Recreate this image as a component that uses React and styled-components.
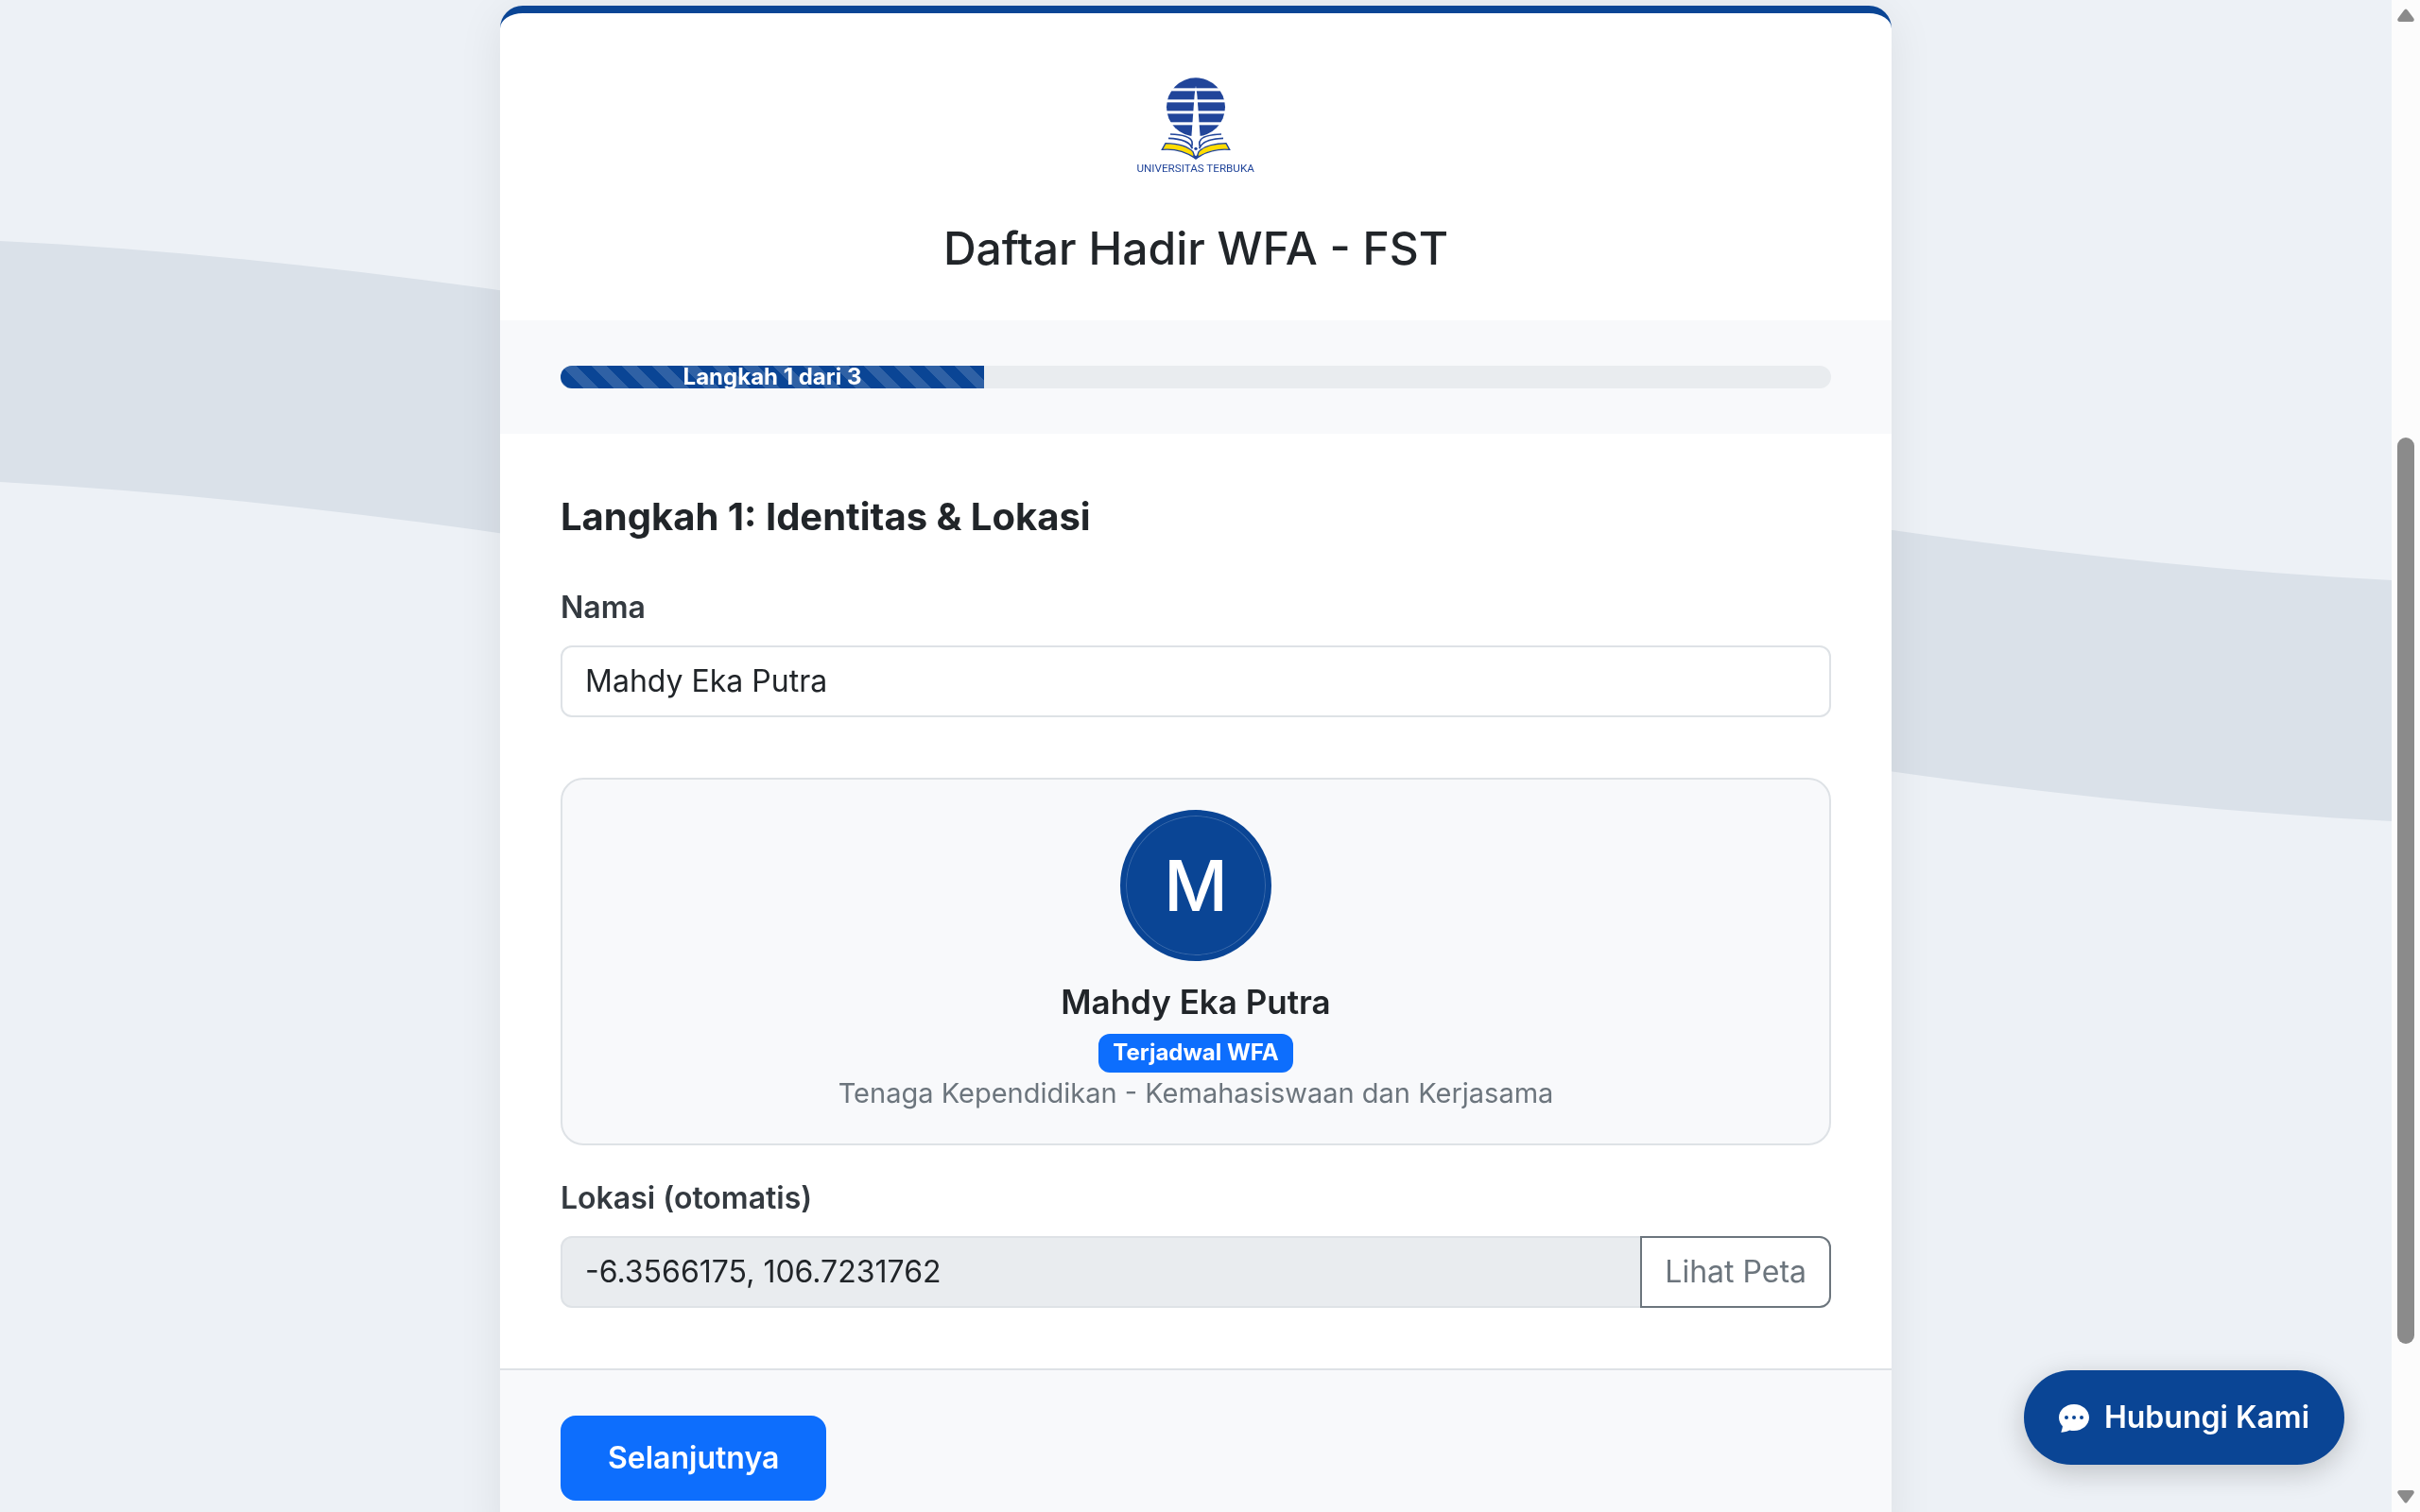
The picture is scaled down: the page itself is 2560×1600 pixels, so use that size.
import React, { useState } from "react";
import styled, { createGlobalStyle, css } from "styled-components";
import { BsChatDotsFill } from "react-icons/bs";

const navy = "#0a4595";
const blue = "#0d6efd";
const lightGrey = "#f8f9fb";
const borderGrey = "#dee2e6";
const scrollbarWidth = "30px";

const GlobalStyle = createGlobalStyle`
    *, *::before, *::after {
        box-sizing: border-box;
    }

    body {
        margin: 0;
        background: #edf1f6;
        color: #212529;
        font-family: Inter, "Liberation Sans", sans-serif;
        font-size: 32px;
        line-height: 48px;
    }

    button, input {
        font: inherit;
    }
`

const Page = styled.div`
    height: 100vh;
    overflow: hidden;
    padding: 6px ${scrollbarWidth} 0 0;
`

const Wave = styled.svg`
    position: fixed;
    top: 0;
    left: 0;
    z-index: -1;
    width: calc(100% - ${scrollbarWidth});
    height: 100%;
`

const Card = styled.main`
    max-width: 1472px;
    margin: 0 auto;
    overflow: hidden;
    background: #fff;
    border-top: 8px solid ${navy};
    border-radius: 24px;
    box-shadow: 0 8px 48px rgba(0, 0, 0, 0.08);
`

const Header = styled.header`
    display: flex;
    flex-direction: column;
    align-items: center;
    gap: 24px;
    padding: 48px 64px;
`

const Title = styled.h1`
    margin: 0;
    font-size: 48px;
    font-weight: 500;
    line-height: 57px;
`

const ProgressSection = styled.div`
    padding: 48px 64px;
    background: ${lightGrey};
`

const Progress = styled.div`
    display: flex;
    height: 24px;
    overflow: hidden;
    background: #e9ecef;
    border-radius: 12px;
`

const ProgressBar = styled.div`
    overflow: hidden;
    background-color: ${navy};
    background-image: linear-gradient(
        45deg,
        rgba(255, 255, 255, 0.15) 25%,
        transparent 25%,
        transparent 50%,
        rgba(255, 255, 255, 0.15) 50%,
        rgba(255, 255, 255, 0.15) 75%,
        transparent 75%,
        transparent
    );
    background-size: 32px 32px;
    color: #fff;
    font-size: 24px;
    font-weight: 700;
    line-height: 24px;
    text-align: center;
    white-space: nowrap;
`

const Body = styled.section`
    padding: 64px;
`

const StepTitle = styled.h2`
    margin: 0 0 48px;
    font-size: 40px;
    font-weight: 700;
    line-height: 48px;
`

const Label = styled.label`
    display: block;
    margin-bottom: 16px;
    color: #343a40;
    font-weight: 600;
`

const Input = styled.input`
    display: block;
    width: 100%;
    min-width: 0;
    height: 76px;
    padding: 11px 24px 13px;
    background: #fff;
    border: 2px solid ${borderGrey};
    border-radius: 12px;
    color: #212529;
    ${props => props.readOnly && css`
        flex: 1;
        background: #e9ecef;
        border-radius: 12px 0 0 12px;
    `}
`

const InputGroup = styled.div`
    display: flex;
`

const OutlineButton = styled.button`
    margin-left: -2px;
    padding: 12px 24px;
    background: transparent;
    border: 2px solid #6c757d;
    border-radius: 0 12px 12px 0;
    color: #6c757d;
`

const Profile = styled.div`
    display: flex;
    flex-direction: column;
    align-items: center;
    margin: 64px 0 32px;
    padding: 32px;
    background: ${lightGrey};
    border: 2px solid ${borderGrey};
    border-radius: 24px;
`

const Avatar = styled.div`
    display: flex;
    align-items: center;
    justify-content: center;
    width: 160px;
    height: 160px;
    margin-bottom: 16px;
    background: ${navy};
    border: 6px solid ${navy};
    border-radius: 50%;
    box-shadow: inset 0 0 0 1px rgba(255, 255, 255, 0.2);
    color: #fff;
    font-size: 74px;
    font-weight: 500;
`

const ProfileName = styled.div`
    font-size: 35px;
    font-weight: 600;
    line-height: 54px;
`

const Badge = styled.span`
    margin: 7px 0 1px;
    padding: 7px 15px 9px;
    background: ${blue};
    border-radius: 12px;
    color: #fff;
    font-size: 24px;
    font-weight: 700;
    line-height: 25px;
`

const ProfileRole = styled.div`
    color: #6c757d;
    font-size: 29px;
    line-height: 42px;
`

const Footer = styled.footer`
    padding: 48px 64px;
    background: ${lightGrey};
    border-top: 2px solid ${borderGrey};
`

const PrimaryButton = styled.button`
    padding: 19px 48px;
    background: ${blue};
    border: 2px solid ${blue};
    border-radius: 16px;
    color: #fff;
    font-weight: 600;
`

const ContactLink = styled.a`
    position: fixed;
    right: 80px;
    bottom: 50px;
    display: flex;
    align-items: center;
    gap: 16px;
    height: 100px;
    padding: 0 37px;
    background: ${navy};
    border-radius: 50px;
    box-shadow: 0 8px 30px rgba(0, 0, 0, 0.2);
    color: #fff;
    font-weight: 600;
    text-decoration: none;
`

const Scrollbar = styled.div`
    position: fixed;
    top: 0;
    right: 0;
    bottom: 0;
    display: flex;
    flex-direction: column;
    align-items: center;
    justify-content: space-between;
    width: ${scrollbarWidth};
    padding: 9px 0;
    background: #fcfcfc;
`

const ScrollTrack = styled.div`
    display: flex;
    flex: 1;
    flex-direction: column;
    width: 18px;
    padding: 440px 0 155px;
`

const ScrollThumb = styled.div`
    flex: 1;
    background: #8b8b8b;
    border-radius: 9px;
`

function Logo() {
    return (
        <svg width="170" height="148" viewBox="0 -24 510 444" role="img" aria-label="Universitas Terbuka">
            <circle cx="255" cy="130" r="93" fill="#21459a" />
            <g fill="#fff">
                <rect x="155" y="70" width="200" height="9" />
                <rect x="155" y="106" width="200" height="9" />
                <rect x="155" y="142" width="200" height="9" />
                <rect x="155" y="178" width="200" height="9" />
                <path d="M255 62 L259 90 L269 226 H241 L251 90 Z" />
            </g>
            <g fill="none" stroke="#21459a" strokeWidth="5">
                <path d="M174 216 C205 217 238 222 243 240 Q245 249 241 258" />
                <path d="M336 216 C305 217 272 222 267 240 Q265 249 269 258" />
                <path d="M168 229 C200 230 236 236 244 262" />
                <path d="M342 229 C310 230 274 236 266 262" />
            </g>
            <g fill="#ffdc00" stroke="#21459a" strokeWidth="4">
                <path d="M159 245 L148 265 C190 261 226 274 253 292 L246 272 C230 254 200 246 159 245 Z" />
                <path d="M351 245 L362 265 C320 261 284 274 257 292 L264 272 C280 254 310 246 351 245 Z" />
            </g>
            <path d="M245 281 Q255 288 265 281 L261 292 Q255 297 249 292 Z" fill="#21459a" />
            <circle cx="255" cy="262" r="5" fill="#21459a" />
            <text
                x="254"
                y="335"
                textAnchor="middle"
                fill="#21459a"
                fontFamily="Roboto, sans-serif"
                fontSize="35"
            >
                UNIVERSITAS TERBUKA
            </text>
        </svg>
    )
}

function Background() {
    return (
        <Wave viewBox="0 0 2530 1600" preserveAspectRatio="none" aria-hidden="true">
            <path
                d="M0 255 C843 296 1687 571 2530 614 V869 C1687 826 843 556 0 510 Z"
                fill="#dae1e9"
            />
        </Wave>
    )
}

function Arrow({ down }) {
    return (
        <svg width="18" height="14" viewBox="0 0 18 14" aria-hidden="true">
            <path
                d={down
                    ? "M2 0 H16 Q19 1 17 4 L11 12 Q9 15 7 12 L1 4 Q-1 1 2 0 Z"
                    : "M2 14 H16 Q19 13 17 10 L11 2 Q9 -1 7 2 L1 10 Q-1 13 2 14 Z"}
                fill="#8b8b8b"
            />
        </svg>
    )
}

function ProfileCard({ name, role }) {
    return (
        <Profile>
            <Avatar>{name[0]}</Avatar>
            <ProfileName>{name}</ProfileName>
            <Badge>Terjadwal WFA</Badge>
            <ProfileRole>{role}</ProfileRole>
        </Profile>
    )
}

function StepProgress({ step, total }) {
    return (
        <ProgressSection>
            <Progress role="progressbar" aria-valuenow={step} aria-valuemin={0} aria-valuemax={total}>
                <ProgressBar style={{ width: `${step / total * 100}%` }}>
                    {`Langkah ${step} dari ${total}`}
                </ProgressBar>
            </Progress>
        </ProgressSection>
    )
}

export default function App() {
    const [name, setName] = useState("Mahdy Eka Putra");
    return (
        <>
            <GlobalStyle />
            <Background />
            <Page>
                <Card>
                    <Header>
                        <Logo />
                        <Title>Daftar Hadir WFA - FST</Title>
                    </Header>
                    <StepProgress step={1} total={3} />
                    <Body>
                        <StepTitle>Langkah 1: Identitas &amp; Lokasi</StepTitle>
                        <Label htmlFor="nama">Nama</Label>
                        <Input id="nama" value={name} onChange={e => setName(e.target.value)} />
                        <ProfileCard
                            name="Mahdy Eka Putra"
                            role="Tenaga Kependidikan - Kemahasiswaan dan Kerjasama"
                        />
                        <Label htmlFor="lokasi">Lokasi (otomatis)</Label>
                        <InputGroup>
                            <Input id="lokasi" value="-6.3566175, 106.7231762" readOnly />
                            <OutlineButton type="button">Lihat Peta</OutlineButton>
                        </InputGroup>
                    </Body>
                    <Footer>
                        <PrimaryButton type="button">Selanjutnya</PrimaryButton>
                    </Footer>
                </Card>
            </Page>
            <ContactLink href="#kontak">
                <BsChatDotsFill size={32} />
                Hubungi Kami
            </ContactLink>
            <Scrollbar aria-hidden="true">
                <Arrow />
                <ScrollTrack>
                    <ScrollThumb />
                </ScrollTrack>
                <Arrow down />
            </Scrollbar>
        </>
    )
}
